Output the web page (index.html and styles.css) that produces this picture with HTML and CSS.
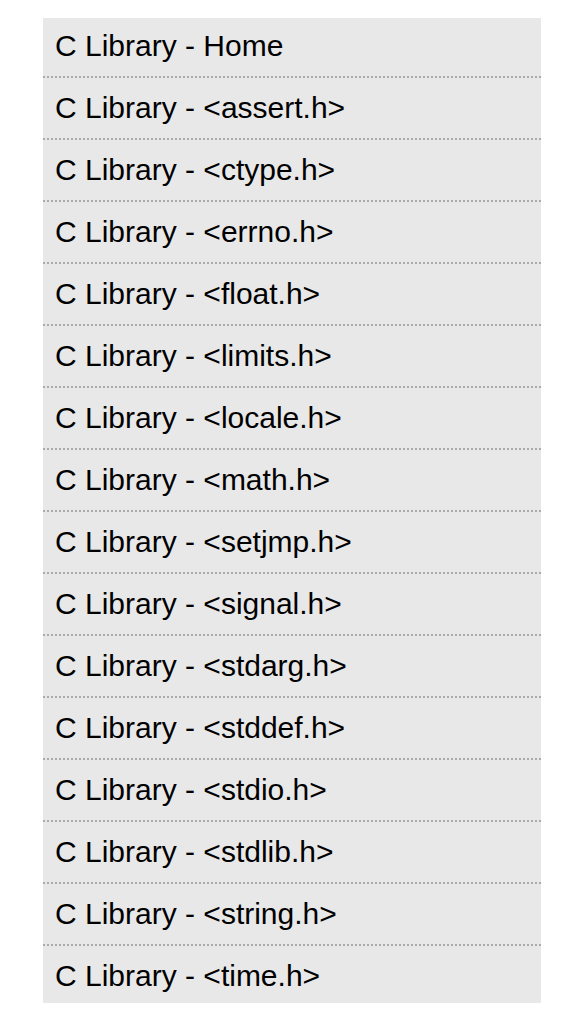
FILE: index.html
```html
<!DOCTYPE html>
<html lang="en">
<head>
  <meta charset="UTF-8">
  <title>C Standard Library</title>
  <link rel="stylesheet" href="styles.css">
</head>
<body>

  <ul class="side-menu">
    <li><a href="#">C Library - Home</a></li>
    <li><a href="#">C Library - &lt;assert.h&gt;</a></li>
    <li><a href="#">C Library - &lt;ctype.h&gt;</a></li>
    <li><a href="#">C Library - &lt;errno.h&gt;</a></li>
    <li><a href="#">C Library - &lt;float.h&gt;</a></li>
    <li><a href="#">C Library - &lt;limits.h&gt;</a></li>
    <li><a href="#">C Library - &lt;locale.h&gt;</a></li>
    <li><a href="#">C Library - &lt;math.h&gt;</a></li>
    <li><a href="#">C Library - &lt;setjmp.h&gt;</a></li>
    <li><a href="#">C Library - &lt;signal.h&gt;</a></li>
    <li><a href="#">C Library - &lt;stdarg.h&gt;</a></li>
    <li><a href="#">C Library - &lt;stddef.h&gt;</a></li>
    <li><a href="#">C Library - &lt;stdio.h&gt;</a></li>
    <li><a href="#">C Library - &lt;stdlib.h&gt;</a></li>
    <li><a href="#">C Library - &lt;string.h&gt;</a></li>
    <li><a href="#">C Library - &lt;time.h&gt;</a></li>
  </ul>

</body>
</html>
```
FILE: styles.css
```css
body {
  font-family: "Liberation Sans", Arial, sans-serif;
  background-color: #fff;
  margin: 0;
  padding: 0;
}

.side-menu {
  list-style: none;
  width: 498px;
  margin: 18px 0 0 43px;
  padding: 0;
  background-color: #e8e8e8;
}

.side-menu li {
  padding: 12px 12px 13px;
  border-bottom: 2px dotted #aaa;
  font-size: 30px;
  line-height: 35px;
}

.side-menu li:first-child {
  padding-top: 10px;
}

.side-menu li:last-child {
  padding-bottom: 10px;
  border-bottom: none;
}

.side-menu a {
  color: #000;
  text-decoration: none;
}

.side-menu a:hover {
  text-decoration: underline;
}
```
